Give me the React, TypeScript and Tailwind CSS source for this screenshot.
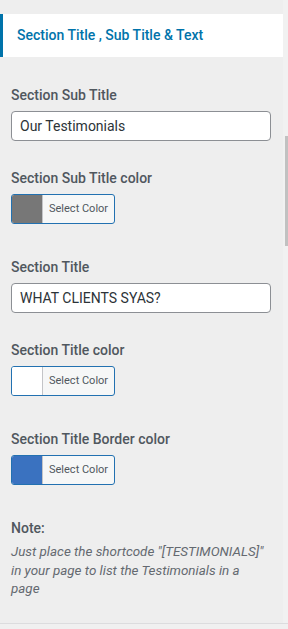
import React from 'react';

const font = { fontFamily: 'Roboto, "Noto Sans", sans-serif' };

function Label({ children, className = '' }: { children: React.ReactNode; className?: string }) {
  return (
    <div className={`h-5 text-[14px] leading-5 font-medium text-[#50575e] ${className}`}>{children}</div>
  );
}

function TextField({ value }: { value: string }) {
  return (
    <div className="mt-[6px] h-[30px] w-[260px] rounded-[4px] border border-[#8c8f94] bg-white px-[8px] text-[14px] leading-[28px] text-[#2c3338]">
      {value}
    </div>
  );
}

function ColorButton({ swatch }: { swatch: string }) {
  return (
    <div className="mt-[6px] flex h-[30px] w-[104px] overflow-hidden rounded-[3px] border border-[#2271b1] bg-[#f6f7f7]">
      <div className={`w-[31px] border-r border-[#c3c4c7] ${swatch}`} />
      <div className="flex-1 pl-[6px] text-[11px] leading-[28px] text-[#50575e]">Select Color</div>
    </div>
  );
}

export default function App() {
  return (
    <div className="flex h-[629px] w-[288px] flex-col bg-[#eeeeee]" style={font}>
      <div className="flex flex-1">
        <div className="flex-1">
          <div className="mt-[14px] flex h-[43px] items-center border-l-[3px] border-[#0073aa] bg-white pl-[14px]">
            <span className="text-[14px] font-medium text-[#0073aa]">Section Title , Sub Title &amp; Text</span>
          </div>

          <div className="pl-[11px]">
            <Label className="mt-[28px]">Section Sub Title</Label>
            <TextField value="Our Testimonials" />

            <Label className="mt-[27px]">Section Sub Title color</Label>
            <ColorButton swatch="bg-[#777777]" />

            <Label className="mt-[33px]">Section Title</Label>
            <TextField value="WHAT CLIENTS SYAS?" />

            <Label className="mt-[27px]">Section Title color</Label>
            <ColorButton swatch="bg-white" />

            <Label className="mt-[33px]">Section Title Border color</Label>
            <ColorButton swatch="bg-[#3a72c0]" />

            <Label className="mt-[33px]">Note:</Label>
            <p className="mt-[5px] w-[256px] text-[13.4px] leading-[18.5px] italic text-[#646970]">
              Just place the shortcode "[TESTIMONIALS]" in your page to list the Testimonials in a page
            </p>
          </div>
        </div>
        <div className="w-[5px] bg-[#f1f1f1]">
          <div className="ml-[2px] mt-[136px] h-[110px] w-[3px] bg-[#c1c1c1]" />
        </div>
      </div>
      <div className="h-px bg-[#dcdcde]" />
      <div className="h-[5px] bg-[#f0f0f0]" />
    </div>
  );
}
